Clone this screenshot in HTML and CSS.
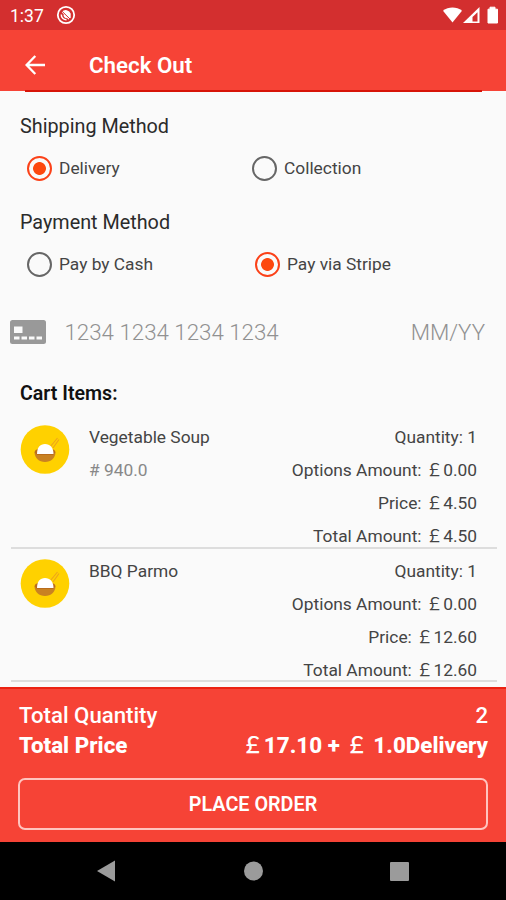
FILE: index.html
```html
<!DOCTYPE html>
<html lang="en">
<head>
<meta charset="utf-8">
<title>Check Out</title>
<link rel="stylesheet" href="styles.css">
</head>
<body>
<header class="status">
  <span class="clock">1:37</span>
  <svg class="status-logo" width="20" height="20" viewBox="0 0 20 20" fill="none" stroke="#fff"><circle cx="10" cy="10" r="8.2" stroke-width="1.8"/><path d="M5.8 7.2A5 5 0 0 1 14.7 8.7V12.5A5 5 0 0 1 12.4 14.4Z" fill="#fff" stroke="none"/><path d="M5.3 9.5A5 5 0 0 0 10.5 14.8M8.2 9.6A3.4 3.4 0 0 0 11 12.6" stroke-width="1.5"/><path d="M6.3 6.5L14 14" stroke="#d32f2f" stroke-width="1"/></svg>
  <svg class="status-icons" width="58" height="20" viewBox="0 0 58 20"><path d="M0 5.8C5.5 1.4 13.5 1.4 19 5.8L9.5 17.5Z" fill="#fff"/><path d="M20 18L36.5 2V18Z" fill="#fff"/><path d="M29.5 16.5V12L34.5 7.2V16.5Z" fill="#d32f2f"/><path d="M45 4.2H47V2.2H52V4.2H54.5V18H45Z" fill="#fff" stroke="#fff" stroke-linejoin="round"/></svg>
</header>
<nav class="appbar">
  <svg class="back" width="20" height="20" viewBox="0 0 20 20" fill="none" stroke="#fff" stroke-width="2.3"><path d="M20 10H2M10.3 1L1.6 10L10.3 19"/></svg>
  <h1>Check Out</h1>
</nav>
<div class="rule"></div>
<main>
  <h2 class="shipping">Shipping Method</h2>
  <div class="options">
    <label class="option"><i class="radio on"></i><span>Delivery</span></label>
    <label class="option second"><i class="radio"></i><span>Collection</span></label>
  </div>
  <h2 class="payment">Payment Method</h2>
  <div class="options">
    <label class="option"><i class="radio"></i><span>Pay by Cash</span></label>
    <label class="option second stripe"><i class="radio on"></i><span>Pay via Stripe</span></label>
  </div>
  <div class="card">
    <svg width="36" height="24" viewBox="0 0 36 24"><rect width="36" height="24" rx="2.5" fill="#999"/><path d="M4 6.5H12.5V13H4ZM4 16.5H9.5V19.5H4ZM11.5 16.5H17V19.5H11.5ZM19 16.5H24.5V19.5H19ZM26.5 16.5H32V19.5H26.5Z" fill="#fafafa"/></svg>
    <span class="number">1234 1234 1234 1234</span>
    <span class="expiry">MM/YY</span>
  </div>
  <h3>Cart Items:</h3>
  <article class="item">
    <svg class="food" width="50" height="50" viewBox="0 0 50 50"><circle cx="25" cy="24.5" r="24.3" fill="#ffd100"/><path d="M30 22L37.5 13M33 23L39 14.5" stroke="#eda31c" stroke-width="1.1"/><path d="M14.5 27H35.5C35.5 33 31 37 25 37S14.5 33 14.5 27Z" fill="#c98222"/><path d="M14.5 27Q15 24.5 18 24H32Q35 24.5 35.5 27L33 30H17Z" fill="#b96c1c"/><path d="M17 29C17 22.5 20 19 25 19S33.5 22.5 33.5 29Z" fill="#fff"/></svg>
    <div class="name"><p>Vegetable Soup</p><p class="code"># 940.0</p></div>
    <div class="amounts"><p class="qty">Quantity: 1</p><p>Options Amount: ￡0.00</p><p>Price: ￡4.50</p><p>Total Amount: ￡4.50</p></div>
  </article>
  <article class="item">
    <svg class="food" width="50" height="50" viewBox="0 0 50 50"><circle cx="25" cy="24.5" r="24.3" fill="#ffd100"/><path d="M30 22L37.5 13M33 23L39 14.5" stroke="#eda31c" stroke-width="1.1"/><path d="M14.5 27H35.5C35.5 33 31 37 25 37S14.5 33 14.5 27Z" fill="#c98222"/><path d="M14.5 27Q15 24.5 18 24H32Q35 24.5 35.5 27L33 30H17Z" fill="#b96c1c"/><path d="M17 29C17 22.5 20 19 25 19S33.5 22.5 33.5 29Z" fill="#fff"/></svg>
    <div class="name"><p>BBQ Parmo</p></div>
    <div class="amounts"><p class="qty">Quantity: 1</p><p>Options Amount: ￡0.00</p><p>Price: ￡12.60</p><p>Total Amount: ￡12.60</p></div>
  </article>
</main>
<footer class="summary">
  <div class="line"><span>Total Quantity</span><span>2</span></div>
  <div class="line price"><span>Total Price</span><span><span class="pound">￡</span>17.10 + <span class="pound">￡</span> 1.0Delivery</span></div>
  <button>PLACE ORDER</button>
</footer>
<nav class="system">
  <svg width="506" height="58" viewBox="0 0 506 58" fill="#9b9b9b"><path d="M97 29L115 18.5V39.5Z"/><circle cx="253.5" cy="29" r="9.5"/><rect x="390" y="20" width="19" height="19" rx="1"/></svg>
</nav>
</body>
</html>
```
FILE: styles.css
```css
* { box-sizing: border-box; margin: 0; padding: 0; }
body {
  width: 506px; height: 900px; overflow: hidden;
  display: flex; flex-direction: column;
  background: #fafafa; color: #444;
  font-family: Roboto, "Noto Sans CJK SC", sans-serif;
  font-size: 17.35px; font-weight: 400;
}
.status { height: 30px; flex: none; background: #d32f2f; color: #fff; display: flex; align-items: center; padding: 0 5px 0 10px; }
.clock { font-size: 17.5px; width: 46px; padding-top: 1px; }
.status-icons { margin-left: auto; }
.appbar { height: 61px; flex: none; background: #f64336; color: #fff; display: flex; align-items: center; padding: 8px 0 0 25px; }
h1 { margin: 0 0 0 44px; font-size: 22.3px; font-weight: 600; }
.rule { height: 2px; flex: none; margin: -1px 24px 0 25px; background: #d71408; }
main { height: 595px; flex: none; overflow: hidden; }
h2 { font-size: 19.8px; font-weight: 400; line-height: 32px; height: 30px; padding-left: 20px; color: #2b2b2b; }
.shipping { margin-top: 19px; }
.payment { margin-top: 24px; }
.options { display: flex; height: 42px; padding: 6px 0 0 27px; }
.option { display: flex; align-items: center; width: 225px; height: 42px; gap: 7px; }
.stripe { padding-left: 3px; }
.radio { width: 25px; height: 25px; border: 2px solid #666; border-radius: 50%; flex: none; }
.radio.on { border-color: #fb4118; background: radial-gradient(circle, #fd480f 0 6px, transparent 6.8px); }
.card { height: 50px; margin-top: 28px; padding: 0 21px 0 10px; display: flex; align-items: center; color: #919191; font-size: 22.3px; font-weight: 300; }
.number { margin-left: 18.5px; }
.expiry { margin-left: auto; }
h3 { margin: 21px 0 0 20px; line-height: 32px; height: 30px; font-size: 19.6px; font-weight: 600; color: #111; }
.item { height: 133.5px; margin: 0 9px 0 11px; padding: 10px 20px 0 9px; display: flex; border-bottom: 2px solid #ddd; }
.item:first-of-type { margin-top: 7px; }
.food { flex: none; }
.name { margin: -4px 0 0 19px; }
.amounts { margin: -4px 0 0 auto; text-align: right; }
.item p { height: 33px; line-height: 33px; white-space: nowrap; }
.item .code { color: #888; }
.summary { height: 155px; flex: none; background: #f64336; border-top: 2px solid #eb2212; padding: 11px 18px 0 19px; color: #fff; }
.line { display: flex; justify-content: space-between; height: 30px; line-height: 30px; font-size: 22.2px; font-weight: 500; white-space: nowrap; }
.price { font-size: 22.4px; font-weight: 800; }
.pound { font-weight: 500; }
button { display: block; width: 470px; height: 52px; margin: 18px 0 0 -1px; border: 2px solid #ffc4bf; border-radius: 7px; background: transparent; color: #fff; font: 600 19.8px Roboto, sans-serif; }
.system { height: 58px; flex: none; background: #000; }
.system svg { display: block; }
```
